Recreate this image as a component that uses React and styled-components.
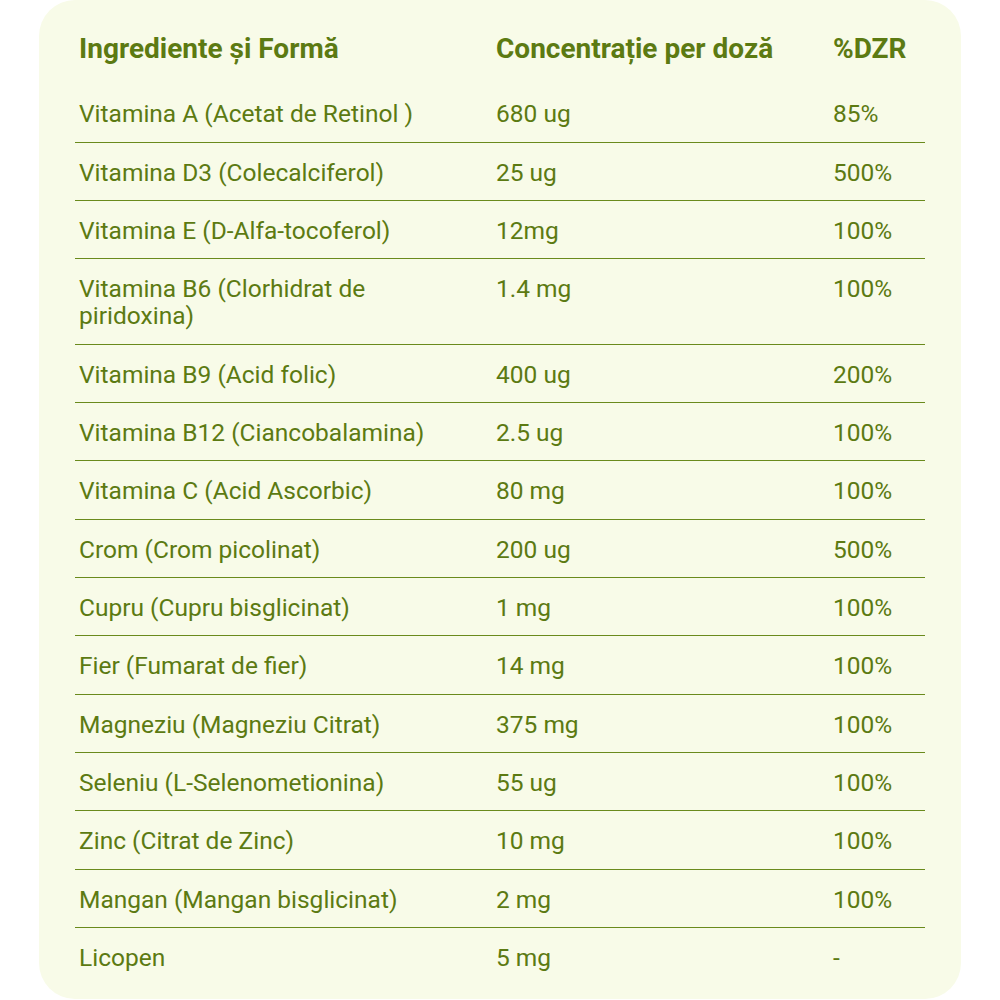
import styled, { createGlobalStyle } from 'styled-components'

const GlobalStyle = createGlobalStyle`
  body {
    margin: 0;
    background: #fff;
    font-family: Roboto, "Liberation Sans", sans-serif;
  }
`

const Card = styled.div`
  width: 922px;
  margin: 0 auto;
  box-sizing: border-box;
  padding: 20px 36px 14px;
  background-color: #f8fbe8;
  border-radius: 36px;
`

const Table = styled.table`
  width: 850px;
  border-collapse: collapse;
  table-layout: fixed;
  color: #5c7a12;
`

const HeadCell = styled.th`
  box-sizing: border-box;
  width: ${({ w }) => w}px;
  text-align: left;
  vertical-align: top;
  font-size: 28px;
  font-weight: 700;
  line-height: 32px;
  padding: 12.5px 4px 19.8px;
`

const Row = styled.tr`
  border-bottom: 1.6px solid #6a8a1c;
  &:last-child {
    border-bottom: none;
  }
`

const Cell = styled.td`
  text-align: left;
  vertical-align: top;
  font-size: 24.5px;
  font-weight: 400;
  line-height: 27px;
  padding: 16px 18px 14.35px 4px;
`

const rows = [
  ['Vitamina A (Acetat de Retinol )', '680 ug', '85%'],
  ['Vitamina D3 (Colecalciferol)', '25 ug', '500%'],
  ['Vitamina E (D-Alfa-tocoferol)', '12mg', '100%'],
  ['Vitamina B6 (Clorhidrat de piridoxina)', '1.4 mg', '100%'],
  ['Vitamina B9 (Acid folic)', '400 ug', '200%'],
  ['Vitamina B12 (Ciancobalamina)', '2.5 ug', '100%'],
  ['Vitamina C (Acid Ascorbic)', '80 mg', '100%'],
  ['Crom (Crom picolinat)', '200 ug', '500%'],
  ['Cupru (Cupru bisglicinat)', '1 mg', '100%'],
  ['Fier (Fumarat de fier)', '14 mg', '100%'],
  ['Magneziu (Magneziu Citrat)', '375 mg', '100%'],
  ['Seleniu (L-Selenometionina)', '55 ug', '100%'],
  ['Zinc (Citrat de Zinc)', '10 mg', '100%'],
  ['Mangan (Mangan bisglicinat)', '2 mg', '100%'],
  ['Licopen', '5 mg', '-'],
]

const App = () => {
  return (
    <>
      <GlobalStyle />
      <Card>
        <Table>
          <thead>
            <tr>
              <HeadCell w={417}>Ingrediente și Formă</HeadCell>
              <HeadCell w={337}>Concentrație per doză</HeadCell>
              <HeadCell w={96}>%DZR</HeadCell>
            </tr>
          </thead>
          <tbody>
            {rows.map(([name, dose, pct]) => (
              <Row key={name}>
                <Cell>{name}</Cell>
                <Cell>{dose}</Cell>
                <Cell>{pct}</Cell>
              </Row>
            ))}
          </tbody>
        </Table>
      </Card>
    </>
  )
}

export default App
